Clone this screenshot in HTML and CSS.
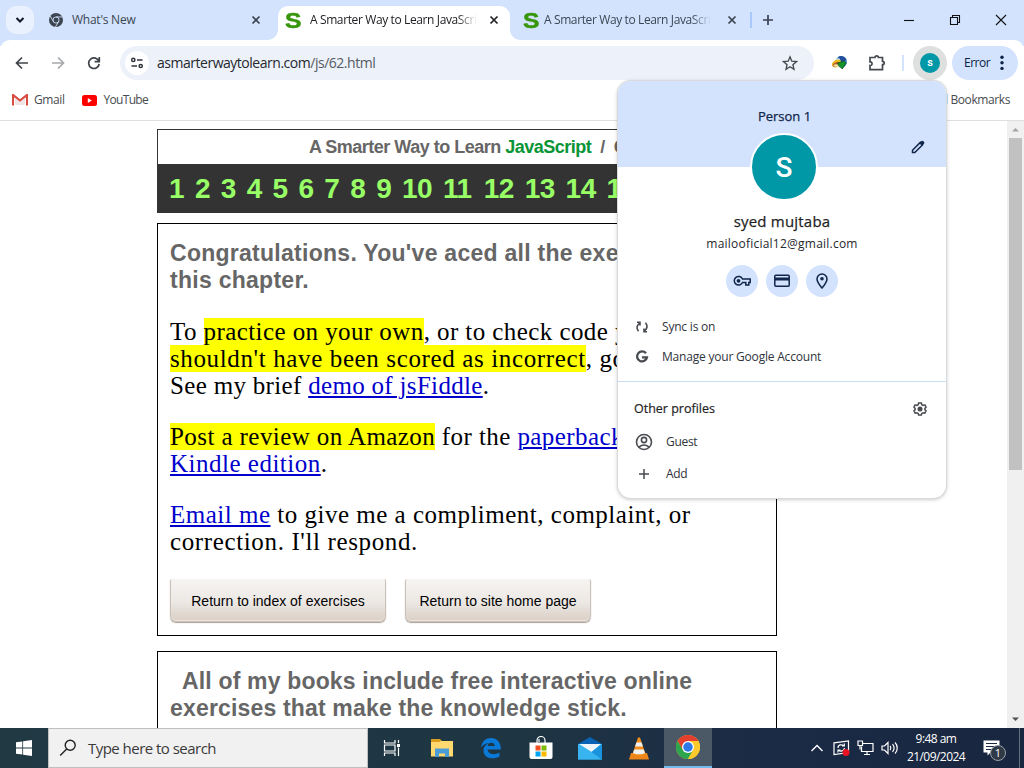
FILE: index.html
```html
<!DOCTYPE html>
<html lang="en">
<head>
<meta charset="utf-8">
<title>A Smarter Way to Learn JavaScript</title>
<link rel="stylesheet" href="styles.css">
</head>
<body>
<div class="tabs">
  <div class="tab-search"><svg width="12" height="12" viewBox="0 0 12 12"><path d="M2.500 4 6 7.500 9.500 4" fill="none" stroke="#10182a" stroke-width="2"/></svg></div>
  <div class="tab first">
    <svg class="fav" width="14" height="14" viewBox="0 0 48 48"><circle cx="24" cy="24" r="24" fill="#3c4450"/><g stroke="#d3e3fd" stroke-width="3" fill="none"><circle cx="24" cy="24" r="10.500"/><path d="M24 13.500H46M15 29 4 10M33 29 22 48"/></g></svg>
    <span class="t-title new">What's New</span>
    <svg class="x" width="10" height="10" viewBox="0 0 10 10"><path d="M1.500 1.500l7 7m0-7-7 7"/></svg>
  </div>
  <div class="tab active">
    <span class="s-logo">S</span>
    <span class="t-title fade">A Smarter Way to Learn JavaScript</span>
    <svg class="x" width="10" height="10" viewBox="0 0 10 10"><path d="M1.500 1.500l7 7m0-7-7 7"/></svg>
  </div>
  <div class="tab third">
    <span class="s-logo">S</span>
    <span class="t-title fade blue">A Smarter Way to Learn JavaScript</span>
    <svg class="x" width="10" height="10" viewBox="0 0 10 10"><path d="M1.500 1.500l7 7m0-7-7 7"/></svg>
  </div>
  <i class="tab-sep"></i>
  <svg class="plus" width="12" height="12" viewBox="0 0 12 12"><path d="M6 1v10M1 6h10" stroke="#3a4250" stroke-width="1.700"/></svg>
  <div class="win">
    <svg width="12" height="12" viewBox="0 0 12 12"><path d="M1 6.500h10"/></svg>
    <svg width="12" height="12" viewBox="0 0 12 12"><path d="M1.500 3.500h7v7h-7zM3.500 3.500v-2h7v7h-2"/></svg>
    <svg width="12" height="12" viewBox="0 0 12 12"><path d="M1 1l10 10m0-10L1 11"/></svg>
  </div>
</div>
<div class="toolbar">
  <svg class="nav" width="16" height="16" viewBox="0 0 16 16"><path d="M14 8H3M8 2.500 2.500 8 8 13.500" stroke="#40444a"/></svg>
  <svg class="nav" width="16" height="16" viewBox="0 0 16 16"><path d="M2 8h11M8 2.500 13.500 8 8 13.500" stroke="#a6a8ab"/></svg>
  <svg class="nav" width="16" height="16" viewBox="0 0 16 16"><path d="M13 6.500A5.300 5.300 0 1 0 13.200 9M13.300 2v4.700H8.600" stroke="#40444a"/></svg>
  <div class="omni">
    <span class="site"><svg width="14" height="14" viewBox="0 0 14 14"><g fill="none" stroke="#30343b" stroke-width="1.500"><circle cx="3.300" cy="3.900" r="1.600"/><path d="M7 3.900h5.500M1.500 10h5.500"/><circle cx="10.700" cy="10" r="1.600"/></g></svg></span>
    <span class="url">asmarterwaytolearn.com<i>/js/62.html</i></span>
    <svg class="star" width="16" height="16" viewBox="0 0 24 24"><path d="M12 2.800l2.700 6.500 7 .6-5.300 4.600 1.600 6.900-6-3.700-6 3.700 1.600-6.900L2.300 9.900l7-.6z" fill="none" stroke="#45484d" stroke-width="2"/></svg>
  </div>
  <svg class="idm" width="17" height="16" viewBox="0 0 17 16"><circle cx="10.200" cy="6.800" r="5.800" fill="#4c8fd0"/><path d="M7 2c3-2 7-.5 8.500 3L11 8z" fill="#234f9a"/><path d="M5 4c3-2 5 0 4 3L5 8z" fill="#c9e6f2"/><ellipse cx="5.500" cy="8.500" rx="4.900" ry="3.500" transform="rotate(-30 5.500 8.500)" fill="#e9bd22"/><ellipse cx="5" cy="9.500" rx="3.500" ry="2" transform="rotate(-25 5 9.500)" fill="#c0532d"/><ellipse cx="6" cy="10.500" rx="3.600" ry="1.300" fill="#eee5a2"/><path d="M6.500 8l6-1.800 2.800 1.600-4 6.200-4-4z" fill="#159329" stroke="#064c16" stroke-width=".7"/></svg>
  <svg class="ext" width="18" height="18" viewBox="0 0 18 18"><path d="M2 3.500H7a1.700 1.700 0 0 1 3.400 0H14.500V7.300a1.700 1.700 0 0 1 0 3.400v5H2v-4.200c2.700.2 2.700-3.800 0-3.600z" fill="none" stroke="#45484d" stroke-width="1.700"/></svg>
  <i class="tool-sep"></i>
  <span class="mini"><b>s</b></span>
  <span class="error">Error<svg width="4" height="16" viewBox="0 0 4 16"><g fill="#0b2145"><circle cx="2" cy="2.200" r="1.700"/><circle cx="2" cy="7.800" r="1.700"/><circle cx="2" cy="13.400" r="1.700"/></g></svg></span>
</div>
<div class="bookmarks">
  <svg width="16" height="12" viewBox="0 0 16 12"><path d="M1 11.500V1l7 5.500L15 1v10.500" fill="none" stroke="#d94b41" stroke-width="2"/><path d="M3 3v8h10V3L8 7z" fill="#f0e5e4"/><path d="M1 1l7 5.600L15 1" fill="none" stroke="#d94b41" stroke-width="1.800"/></svg>
  <span class="gmail">Gmail</span>
  <svg width="15" height="11" viewBox="0 0 15 11"><rect width="15" height="11" rx="2.500" fill="#f00"/><path d="M5.800 3v5l4-2.500z" fill="#fff"/></svg>
  <span class="yt">YouTube</span>
  <span class="all">All Bookmarks</span>
</div>
<div class="view">
  <div class="page">
    <div class="site-head">
      <div class="site-title">A Smarter Way to Learn <em>JavaScript</em>&nbsp; /&nbsp; C</div>
      <div class="nums"><span>1</span><span>2</span><span>3</span><span>4</span><span>5</span><span>6</span><span>7</span><span>8</span><span>9</span><span class="d">10</span><span class="d">11</span><span class="d">12</span><span class="d">13</span><span class="d">14</span><span class="d">15</span></div>
    </div>
    <div class="box main">
      <h2>Congratulations. You've aced all the exercises for<br>this chapter.</h2>
      <p><span class="snug">To <mark>practice on your own</mark>, or to check code you</span><br><span class="loose"><mark>shouldn't have been scored as incorrect</mark>, go to</span><br><span class="tight">See my brief <a>demo of jsFiddle</a>.</span></p>
      <p><span class="snug">
        <mark>Post a review on Amazon</mark> for the <a>paperback</a></span><br><a>Kindle edition</a>.</p>
      <p><a>Email me</a> to give me a compliment, complaint, or<br><span class="loose">correction. I'll respond.</span></p>
      <div class="btns"><span class="btn b1">Return to index of exercises</span><span class="btn b2">Return to site home page</span></div>
    </div>
    <div class="box second">
      <h2><span class="indent">All of my books include free interactive online</span><br>exercises that make the knowledge stick.</h2>
    </div>
  </div>
  <div class="scroll">
    <svg width="17" height="17" viewBox="0 0 17 17"><path d="M5 10.500h7L8.500 7z" fill="#a3a3a3"/></svg>
    <i class="thumb"></i>
    <svg class="down" width="17" height="17" viewBox="0 0 17 17"><path d="M5 6.500h7L8.500 10z" fill="#505050"/></svg>
  </div>
</div>
<div class="taskbar">
  <div class="start"><svg width="16" height="16" viewBox="0 0 16 16"><path d="M0 2.300 6.300 1.400v6.200H0zM7.100 1.300 16 0v7.600H7.100zM0 8.400h6.300v6.200L0 13.700zM7.100 8.400H16V16l-8.900-1.300z" fill="#fff"/></svg></div>
  <div class="search"><svg width="18" height="18" viewBox="0 0 18 18"><circle cx="11.200" cy="6.300" r="5" fill="none" stroke="#222" stroke-width="1.400"/><path d="M7.700 10 1.200 16.600" stroke="#222" stroke-width="1.400"/></svg><span>Type here to search</span></div>
  <div class="app"><svg width="18" height="18" viewBox="0 0 18 18"><path d="M1.500 1v3h10.500V1M1.500 17v-3H12v3M1.500 6h10.500v6H1.500zM15.500 1v3M15.500 8.500V17" fill="none" stroke="#fff" stroke-width="1.200"/><path d="M14 5h3v3h-3z" fill="#fff"/></svg></div>
  <div class="app"><svg width="22" height="20" viewBox="0 0 22 20"><path d="M0 1h9l2 2h10v4H0z" fill="#d99d20"/><path d="M0 4h8l2-1h12v15.500H0z" fill="#ffd970"/><path d="M4 19v-8.500h14V19h-4v-3.500H8V19z" fill="#4b9bd6"/></svg></div>
  <div class="app"><svg width="22" height="22" viewBox="0 0 22 22"><path d="M1 10.500C2 4 6 1 11 1c6 0 10 4.500 9.800 11.500H7.500c.5 5 7.500 6 12 3v4C13 23 3.500 21.500 3.500 13.500c0-3.500 2-6 5.500-7.500-3.500.2-6.500 2-8 4.500zM7.500 9h7.300c0-4.500-6.800-4.500-7.300 0z" fill="#0a7ad8"/></svg></div>
  <div class="app"><svg width="24" height="24" viewBox="0 0 24 24"><path d="M8 7V4.500a4 4 0 0 1 8 0V7M10 6V3" fill="none" stroke="#fff" stroke-width="1.200"/><path d="M.5 6.500h23V21a2 2 0 0 1-2 2h-19a2 2 0 0 1-2-2z" fill="#fff"/><path d="M6.500 9.500h5v5h-5z" fill="#f25022"/><path d="M12.500 9.500h5v5h-5z" fill="#7fba00"/><path d="M6.500 15.500h5v5h-5z" fill="#00a4ef"/><path d="M12.500 15.500h5v5h-5z" fill="#ffb900"/></svg></div>
  <div class="app"><svg width="24" height="23" viewBox="0 0 24 23"><path d="M0 7 12 0l12 7v5H0z" fill="#0a62b4"/><path d="M0 7h24v15.500H0z" fill="#2badea"/><path d="M1 7h22L13.500 15z" fill="#eef5fa"/><path d="M0 7l14 8.500 10 7H0z" fill="#38b5f0"/><path d="M24 7 13.500 15 24 22.500z" fill="#1a93dc"/></svg></div>
  <div class="app"><svg width="20" height="23" viewBox="0 0 20 23"><path d="M2 16h16l2 6.500H0z" fill="#ed8518"/><path d="M9 .5h2L16.500 17c-2 2.500-11 2.500-13 0z" fill="#f18e1c"/><path d="M7.400 5.500h5.200l1.300 4H6.100zM5.200 12.500h9.600l1.200 3.500c-2 1.700-10 1.700-12 0z" fill="#edf0f3"/></svg></div>
  <div class="app current"><svg width="24" height="24" viewBox="0 0 48 48"><circle cx="24" cy="24" r="24" fill="#fdca2e"/><path d="M3.200 12a24 24 0 0 1 41.600 0H24L13.600 30z" fill="#e43e2f"/><path d="M3.200 12A24 24 0 0 0 24 48l10.400-18-10.400 5-10.400-5z" fill="#2da44e"/><path d="M44.800 12A24 24 0 0 1 24 48l10.400-18A12 12 0 0 0 24 12z" fill="#fdca2e"/><circle cx="24" cy="24" r="12" fill="#fff"/><circle cx="24" cy="24" r="9.500" fill="#2f78e8"/></svg></div>
  <div class="tray">
    <svg class="chev" width="14" height="8" viewBox="0 0 14 8"><path d="M1.500 7 7 1.500 12.500 7" fill="none" stroke="#fff" stroke-width="1.400"/></svg>
    <svg class="sync" width="18" height="16" viewBox="0 0 18 16"><path d="M1 2.800 15.500 1v11.500L1 14.500z" fill="none" stroke="#fff" stroke-width="1.200"/><path d="M5 8c0-3.500 4-4 6-2M11.300 3.500V6H9M11.500 8c-.3 3-4 4-6 2M5 12.500V10h2.500" fill="none" stroke="#fff" stroke-width="1.200"/><circle cx="13" cy="12.500" r="3.500" fill="#e81224"/></svg>
    <svg class="net" width="17" height="16" viewBox="0 0 17 16"><path d="M5.500 3.500H16v8H4.500V6.500M10 11.500v3M7 14.500h6" fill="none" stroke="#fff" stroke-width="1.200"/><path d="M1 1h4.500v4.500H1zM3 5.500v4" fill="none" stroke="#fff" stroke-width="1.200"/></svg>
    <svg class="vol" width="18" height="14" viewBox="0 0 18 14"><path d="M1 5v4h2.500L7 12.500v-11L3.500 5z" fill="none" stroke="#fff" stroke-width="1.200"/><path d="M9 5c1 1 1 3 0 4M11.500 3c2 2.500 2 5.500 0 8M14 1.500c3 3 3 8 0 11" fill="none" stroke="#fff" stroke-width="1.200"/></svg>
    <div class="clock"><span class="time">9:48 am</span><span class="date">21/09/2024</span></div>
    <div class="note"><svg width="18" height="16" viewBox="0 0 18 16"><path d="M.5.500h16v12h-9l-3 3v-3h-4z" fill="#fff"/><path d="M3 3.500h11M3 6.500h11M3 9.500h8" stroke="#1b2a43" stroke-width="1.200"/></svg><b>1</b></div>
    <i class="peek"></i>
  </div>
</div>
<div class="popup">
  <div class="banner"><span class="person">Person 1</span></div>
  <svg class="pencil" width="14" height="14" viewBox="0 0 14 14"><path d="M1.500 12.500v-2.300L9.300 2.400l2.300 2.300-7.800 7.800z" fill="none" stroke="#10264b" stroke-width="1.500"/><path d="M8.300 3.200 10.500 1q.8-.6 1.500 0l1.100 1.100q.6.700 0 1.400l-2.300 2.200z" fill="#10264b"/></svg>
  <div class="avatar">S</div>
  <div class="name">syed mujtaba</div>
  <div class="mail">mailooficial12@gmail.com</div>
  <div class="chips">
    <span><svg width="18" height="12" viewBox="0 0 18 12"><path d="M9.500 4H17.200v3.500h-1.400V10h-3V7.500H9.500A4.300 4.300 0 1 1 9.500 4z" fill="none" stroke="#10264b" stroke-width="1.500"/><circle cx="5.500" cy="5.800" r="1.900" fill="#10264b"/></svg></span>
    <span><svg width="16" height="14" viewBox="0 0 16 14"><rect x=".8" y="1.200" width="14.400" height="11" rx="1" fill="none" stroke="#10264b" stroke-width="1.500"/><path d="M1 3.500h14v3H1z" fill="#10264b"/></svg></span>
    <span><svg width="12" height="16" viewBox="0 0 12 16"><path d="M6 15C3 11.500 1 8.800 1 6a5 5 0 0 1 10 0c0 2.800-2 5.500-5 9z" fill="none" stroke="#10264b" stroke-width="1.500"/><circle cx="6" cy="5.800" r="1.800" fill="#10264b"/></svg></span>
  </div>
  <div class="row sync-row"><svg width="16" height="14" viewBox="0 0 16 14"><path d="M3 2.200H6V5.500M6 2.800Q.8 6.500 4.500 11.200M13 11.800H10V8.500M10 11.200q5.200-3.700 1.500-8.400" fill="none" stroke="#484b50" stroke-width="1.600"/></svg><span>Sync is on</span></div>
  <div class="row manage"><svg width="16" height="14" viewBox="0 0 16 14"><path d="M12 3.300A5 5 0 1 0 13 7.300H8" fill="none" stroke="#484b50" stroke-width="2.300"/></svg><span>Manage your Google Account</span></div>
  <div class="others"><span>Other profiles</span><svg width="14" height="14" viewBox="0 0 14 14"><path d="M5.600 1h2.800l.4 1.700 1.300.7 1.700-.5 1.300 2.300-1.200 1.200v1.300l1.200 1.200-1.300 2.300-1.700-.5-1.300.7-.4 1.700H5.600l-.4-1.700-1.300-.7-1.700.5L.9 8.900l1.200-1.200V6.400L.9 5.200l1.300-2.300 1.700.5 1.300-.7z" fill="none" stroke="#484b50" stroke-width="1.500"/><circle cx="7" cy="7" r="2.500" fill="#484b50"/></svg></div>
  <div class="prof"><svg width="18" height="18" viewBox="0 0 18 18"><g fill="none" stroke="#484b50" stroke-width="1.600"><circle cx="9" cy="9" r="7.500"/><circle cx="9" cy="7" r="2.600"/><path d="M3.800 14.200Q9 9.800 14.200 14.200"/></g></svg><span>Guest</span></div>
  <div class="prof add"><svg width="18" height="18" viewBox="0 0 18 18"><path d="M9 4v10M4 9h10" stroke="#484b50" stroke-width="1.500"/></svg><span>Add</span></div>
</div>
</body>
</html>
```
FILE: styles.css
```css
* { box-sizing: border-box; }
html, body { height: 100%; overflow: hidden; }
body { margin: 0; width: 1024px; height: 768px; display: flex; flex-direction: column; position: relative; background: #fff; font: 12px/16px "Open Sans", "Noto Sans", sans-serif; color: #30343b; white-space: nowrap; }
svg { display: block; flex: none; }
i { font-style: normal; }

.tabs { height: 46px; margin-bottom: -6px; padding-bottom: 6px; background: #d3e3fd; display: flex; align-items: center; flex: none; }
.tab-search { width: 28px; height: 28px; margin-left: 6px; border-radius: 10px; background: #e9f0fe; display: flex; align-items: center; justify-content: center; }
.tab { display: flex; align-items: center; height: 34px; margin-top: 6px; padding-bottom: 6px; flex: none; }
.tab.first { width: 244px; padding-left: 15px; }
.fav { margin-right: 9px; }
.t-title { width: 167px; overflow: hidden; color: #3c4654; letter-spacing: -.38px; }
.new { width: 179px; letter-spacing: -.25px; }
.fade { -webkit-mask-image: linear-gradient(90deg, #000 88%, transparent); mask-image: linear-gradient(90deg, #000 88%, transparent); }
.x { fill: none; stroke: #3a4250; stroke-width: 1.700; }
.tab.active { position: relative; width: 232px; padding-left: 7px; background: #fff; border-radius: 10px 10px 0 0; }
.tab.active::before, .tab.active::after { content: ""; position: absolute; bottom: 0; width: 10px; height: 10px; }
.tab.active::before { left: -10px; background: radial-gradient(circle at 0 0, transparent 9.5px, #fff 10px); }
.tab.active::after { right: -10px; background: radial-gradient(circle at 100% 0, transparent 9.5px, #fff 10px); }
.active .t-title { color: #202124; }
.active .x { stroke: #202124; }
.tab.active .x { margin-left: 12px; }
.tab.third { width: 240px; padding-left: 13px; }
.third .x { margin-left: 16px; }
.s-logo { width: 16px; margin-right: 5px; padding-top: 1px; font: bold 22px/22px "Liberation Sans", Arial, sans-serif; color: #38960c; transform: scaleX(1.12); transform-origin: left; -webkit-text-stroke: .5px #38960c; }
.active .s-logo { margin-right: 9px; }
.tab-sep { width: 2px; height: 16px; background: #a8c7fa; }
.plus { margin-left: 10px; }
.win { margin-left: auto; margin-right: 17px; display: flex; gap: 34px; }
.win svg { fill: none; stroke: #111; stroke-width: 1.100; }

.toolbar { position: relative; height: 46px; flex: none; background: #fff; border-radius: 10px 10px 0 0; display: flex; align-items: center; padding-left: 14px; }
.nav { margin-right: 20px; fill: none; }
.nav path { fill: none; stroke-width: 1.700; }
.omni { width: 694px; height: 34px; margin-left: -2px; border-radius: 17px; background: #ecf1fa; display: flex; align-items: center; padding: 0 16px 0 5px; }
.site { width: 24px; height: 24px; border-radius: 50%; background: #fff; display: flex; align-items: center; justify-content: center; }
.url { margin-left: 8px; font-size: 14px; color: #25282d; letter-spacing: -.48px; }
.url i { color: #565b63; }
.star { margin-left: auto; }
.idm { margin-left: 17px; }
.ext { margin-left: 20px; }
.tool-sep { width: 2px; height: 16px; margin-left: 16px; background: #d3e3fd; }
.mini { width: 34px; height: 34px; margin-left: 9px; border-radius: 50%; background: #dedfdf; display: flex; align-items: center; justify-content: center; }
.mini b { width: 20px; height: 20px; border-radius: 50%; background: #0097a7; color: #fff; text-align: center; font: 600 11px/19px Roboto, sans-serif; }
.error { margin-left: 5px; width: 66px; height: 34px; border-radius: 17px; background: #d3e3fd; color: #0b2145; letter-spacing: -.5px; display: flex; align-items: center; justify-content: space-between; padding: 0 14px 0 12px; }

.bookmarks { height: 35px; flex: none; border-bottom: 1px solid #dedfe1; display: flex; align-items: center; padding: 0 14px 6px 12px; color: #484b50; letter-spacing: -.4px; }
.gmail { margin: 0 17px 0 6px; }
.yt { margin-left: 7px; letter-spacing: -.7px; }
.all { margin-left: auto; }

.view { height: 607px; flex: none; display: flex; overflow: hidden; }
.page { width: 1007px; padding: 8px 0 0 157px; }
.site-head { width: 620px; height: 84px; border: 1px solid #333; background: #333; overflow: hidden; }
.site-title { height: 34px; background: #fff; padding-left: 151px; font: bold 18px/35px "Liberation Sans", Arial, sans-serif; letter-spacing: -.5px; color: #666; }
.site-title em { font-style: normal; color: #099436; }
.nums { display: flex; height: 49px; padding-left: 11px; font: bold 28px/50px "Liberation Sans", Arial, sans-serif; color: #99ff66; }
.nums span { width: 25.900px; flex: none; }
.nums .d { width: 40.900px; letter-spacing: -.5px; }
.box { width: 620px; border: 1px solid #000; padding: 16px 0 0 12px; overflow: hidden; }
.main { height: 413px; margin-top: 10px; }
.second { height: 200px; margin-top: 15px; }
h2 { margin: 0 0 24px; font: bold 23px/27px "Liberation Sans", Arial, sans-serif; letter-spacing: .17px; color: #666; }
.main h2 { letter-spacing: .27px; }
.indent { margin-left: 12px; }
p { margin: 0 0 24px; font: 25px/27px "Liberation Serif", serif; color: #000; letter-spacing: .5px; }
.snug { letter-spacing: .42px; }
.tight { letter-spacing: .32px; }
.loose { letter-spacing: .63px; }
mark { background: #ff0; color: #000; }
a { color: #00c; text-decoration: underline; text-decoration-thickness: 2px; text-underline-offset: 2px; }
.btns { display: flex; gap: 19px; }
.btn { height: 43px; border: 1px solid #c9c0b8; border-top: 0; border-radius: 2px 2px 6px 6px; background: linear-gradient(#f6f4f2, #ece8e4 55%, #dacfc5); box-shadow: inset 0 -1px #eee5dd, 0 1px 1px #aaa097; text-align: center; font: 14px/45px "Liberation Sans", Arial, sans-serif; color: #000; }
.b1 { width: 216px; }
.b2 { width: 186px; }
.scroll { width: 17px; background: #f0f0f0; display: flex; flex-direction: column; }
.thumb { width: 13px; height: 332px; margin-left: 2px; background: #c1c1c1; }
.down { margin-top: auto; }

.taskbar { height: 40px; flex: none; display: flex; background: linear-gradient(90deg, #213943, #1e3543 50%, #1b2b45 75%, #192640); color: #fff; }
.start { width: 48px; display: flex; align-items: center; justify-content: center; }
.search { width: 320px; background: #f1f1f1; border: 1px solid #bfbfbf; color: #3a3a3a; display: flex; align-items: center; padding-left: 10px; font-size: 15px; }
.search span { margin-left: 11px; letter-spacing: -.53px; }
.app { width: 49.300px; display: flex; align-items: center; justify-content: center; flex: none; }
.app:nth-child(3) { width: 48px; }
.app:nth-child(4) { padding-left: 2px; width: 50.600px; }
.current { width: 48px; background: #4b5967; border-bottom: 2px solid #76b9ed; }
.tray { display: flex; align-items: center; margin-left: auto; }
.chev { margin-right: 9px; }
.sync { margin-right: 6px; }
.net { margin-right: 7px; }
.vol { margin-right: 7px; }
.clock { width: 60px; display: flex; flex-direction: column; align-items: center; line-height: 18px; letter-spacing: -.55px; }
.note { position: relative; margin-left: 17px; width: 36px; }
.note b { position: absolute; left: 7px; top: 5px; width: 16px; height: 16px; border: 1px solid #9aa0a8; border-radius: 50%; background: #303946; font: 11px/14px "Open Sans", sans-serif; text-align: center; }
.peek { width: 1px; height: 40px; background: #667080; margin-right: 4px; }

.popup { position: absolute; left: 618px; top: 81px; width: 328px; height: 417px; border-radius: 13px; background: #fff; box-shadow: 0 0 0 1px #d8dadd, 0 1px 4px rgba(0,0,0,.3); display: flex; flex-direction: column; color: #30343b; }
.banner { height: 86px; flex: none; background: #d3e3fd; border-radius: 13px 13px 0 0; text-align: center; padding: 27px 0 0 5px; font-size: 13px; color: #10264b; -webkit-text-stroke: .25px; }
.pencil { position: absolute; left: 293px; top: 59px; }
.avatar { width: 68px; height: 68px; margin: -34px 0 0 132px; flex: none; border: 2px solid #fff; border-radius: 50%; background: #0097a7; color: #fff; text-align: center; font: 500 28px/65px Roboto, sans-serif; }
.name { margin-top: 10px; height: 20px; font-size: 15px; line-height: 20px; text-align: center; letter-spacing: .2px; -webkit-text-stroke: .25px; color: #1f1f1f; }
.mail { margin-top: 4px; height: 18px; line-height: 18px; text-align: center; letter-spacing: .23px; color: #25282d; }
.chips { display: flex; gap: 8px; margin: 12px 0 0 108px; }
.chips span { width: 32px; height: 32px; border-radius: 50%; background: #d3e3fd; display: flex; align-items: center; justify-content: center; }
.row { display: flex; align-items: center; height: 30px; padding-left: 16px; gap: 12px; flex: none; letter-spacing: -.2px; }
.sync-row { margin-top: 15px; }
.others { margin-top: 9px; border-top: 1px solid #c9ddf2; height: 54px; display: flex; align-items: center; justify-content: space-between; padding: 0 19px 0 16px; font-size: 12.500px; color: #1f1f1f; -webkit-text-stroke: .2px; }
.prof { display: flex; align-items: center; height: 32px; margin-top: -9px; padding-left: 17px; gap: 13px; letter-spacing: -.3px; }
.add { margin-top: 0; }
```
